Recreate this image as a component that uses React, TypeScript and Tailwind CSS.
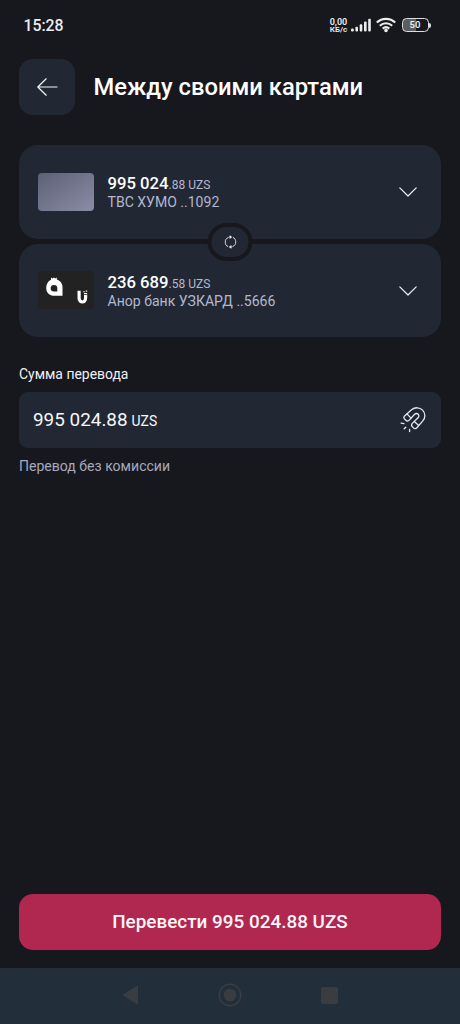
import type { ReactNode } from "react";

function StatusBar() {
  return (
    <div className="flex h-[50px] items-center justify-between pl-[23.5px] pr-[29px] text-[#ededf0]">
      <span className="pt-px text-[15.8px] font-[470] leading-none">15:28</span>
      <div className="flex items-center">
        <div className="mr-px flex w-[18px] flex-col items-center pt-px text-[9px] font-semibold leading-[8px] whitespace-nowrap">
          <span>0,00</span>
          <span className="text-[8px]">КБ/с</span>
        </div>
        <svg className="ml-[2px]" width="21" height="14" viewBox="0 0 21 14" fill="currentColor">
          <rect x="0" y="10.5" width="2.8" height="3" rx="1.2" />
          <rect x="4.4" y="8.7" width="2.6" height="4.8" rx="1" />
          <rect x="8.7" y="6.2" width="2.6" height="7.3" rx="1" />
          <rect x="13" y="3.6" width="2.6" height="9.9" rx="1" />
          <rect x="17.2" y="0.8" width="2.6" height="12.7" rx="1" />
        </svg>
        <svg className="ml-[4px]" width="20" height="16" viewBox="0 0 20 16" fill="none" stroke="currentColor" strokeWidth="2.1">
          <path d="M.8 5.6c5.2-5 13.2-5 18.4 0" />
          <path d="M3.8 8.7c3.6-3.3 8.8-3.3 12.4 0" />
          <path d="M6.7 11.6c2-1.7 4.6-1.7 6.6 0" />
          <circle cx="10" cy="13.4" r="1.8" fill="currentColor" stroke="none" />
        </svg>
        <div className="ml-[6px] flex items-center">
          <div className="flex h-[13.5px] w-[27px] items-center justify-center rounded-[4.5px] border-[1.5px] border-[#dedee2] bg-linear-to-r from-[#5c5d62] from-50% to-transparent to-50% text-[9.5px] font-semibold leading-none">
            50
          </div>
          <div className="ml-[0.5px] h-[5px] w-[2px] rounded-r-sm bg-[#dedee2]" />
        </div>
      </div>
    </div>
  );
}

function AccountCard({ thumb, whole, cents, name }: { thumb: ReactNode; whole: string; cents: string; name: string }) {
  return (
    <div className="flex h-[93.5px] items-center rounded-[19px] bg-[#222833] pl-[18.5px] pr-[24px]">
      {thumb}
      <div className="ml-[14px] flex flex-1 flex-col pt-[3px]">
        <div className="flex h-[18px] items-baseline leading-[18px]">
          <span className="text-[16.7px] font-[485] text-white">{whole}</span>
          <span className="text-[12px] text-[#b3b7d0]">{cents} UZS</span>
        </div>
        <div className="h-[18px] text-[14.05px] leading-[18px] text-[#b3b7d0]">{name}</div>
      </div>
      <svg className="mt-px" width="18" height="10" viewBox="0 0 18 10" fill="none" stroke="#eff0f6" strokeWidth="1.2" strokeLinecap="round" strokeLinejoin="round">
        <path d="M.8.8 9 9 17.2.8" />
      </svg>
    </div>
  );
}

function PlainThumb() {
  return <div className="h-[38px] w-14 rounded-[4px] bg-linear-to-br from-[#5e6076] to-[#8a8da5]" />;
}

function AnorThumb() {
  return (
    <svg className="rounded-[4px] bg-[#222222]" width="56" height="38" viewBox="0 0 56 38">
      <path fill="#fff" fillRule="evenodd" d="M13 6.6 14.6 7.4 15.9 6.6 17.2 7.4 18.8 6.6 18.8 8.6C22.3 9.8 24.5 12.5 24.5 16.2V24.8H16.3C11.6 24.8 8.2 21.4 8.2 16.9C8.2 13 10 10 13 8.7ZM16 13.9A3.3 3.3 0 1 0 16 20.5H19.3V17.2A3.3 3.3 0 0 0 16 13.9Z" />
      <path fill="none" stroke="#fff" strokeWidth="3.2" d="M41.1 19.7V27.3C41.1 32.2 47.6 32.2 47.6 27.3V24" />
      <path fill="none" stroke="#fff" strokeWidth="1.1" d="M45.3 20.8H46.8M47.8 20.1H49.2M46 22.6H49.2" />
    </svg>
  );
}

function SwapButton() {
  return (
    <button className="absolute left-1/2 top-1/2 mt-[0.5px] flex h-[38px] w-[45px] -translate-x-1/2 -translate-y-1/2 items-center justify-center rounded-[19px] border-[4.5px] border-[#17181d] bg-[#222833]">
      <svg width="12" height="14" viewBox="0 0 12 14" fill="none" stroke="#e8e9ef" strokeWidth="1">
        <path d="M4 2.4C-.4 4-.4 10 3.6 11.6M8 11.6C12.4 10 12.4 4 8.4 2.4M6 2H4.5M6 12H7.5" />
        <path fill="#e8e9ef" stroke="none" d="M5.2.3 7.7 2.1 5.2 3.9ZM6.8 10.1 4.3 11.9 6.8 13.7Z" />
      </svg>
    </button>
  );
}

function MagnetIcon() {
  return (
    <svg width="26" height="26" viewBox="0 0 26 26" fill="none" stroke="#e7e8f2" strokeWidth="1.3" strokeLinecap="round" strokeLinejoin="round">
      <path d="M4.6 8.9 11.5 2.8C15 -.1 19.7 .2 22.6 3.1C25.5 6.1 25.6 10.8 22.8 13.9L16.9 20.7C15.9 21.8 14.5 21.9 13.5 20.9L12.3 19.7C11.3 18.7 11.3 17.5 12.3 16.4L18 10.7C19.1 9.6 19.1 8.2 18.2 7.3C17.2 6.3 15.7 6.3 14.6 7.3L9.3 13.1C8.3 14.2 6.9 14.3 5.9 13.3L4.7 12.1C3.7 11.1 3.7 9.9 4.6 8.9Z" />
      <path d="M7 6.9 11 11.1M14.3 14.4 18.7 18.4" />
      <path d="M1.1 16.2 3.9 16.6M4.2 21.8 5.8 20.2M9.6 22.3V24.6" />
    </svg>
  );
}

function NavigationBar() {
  return (
    <div className="flex h-14 items-center justify-between bg-[#232e3b] pb-[2px] pl-[122px] pr-[122.5px] text-[#393c40]">
      <svg width="17" height="20" viewBox="0 0 17 20" fill="currentColor">
        <path d="M.3 10 16 .3V19.7Z" />
      </svg>
      <svg width="24" height="24" viewBox="0 0 24 24" fill="currentColor">
        <circle cx="12" cy="12" r="10.7" fill="none" stroke="currentColor" strokeWidth="1.5" />
        <circle cx="12" cy="12" r="6.3" />
      </svg>
      <div className="size-[17px] rounded-[2px] bg-[#393c40]" />
    </div>
  );
}

export default function App() {
  return (
    <div className="flex h-[1024px] w-[460px] flex-col overflow-hidden bg-[#17181d] font-['Roboto','Noto_Sans',sans-serif]">
      <StatusBar />
      <header className="flex items-center px-[19px] pt-[8.5px]">
        <button className="flex size-14 items-center justify-center rounded-[14px] bg-[#222833]">
          <svg width="21" height="18" viewBox="0 0 21 18" fill="none" stroke="#f4f4f8" strokeWidth="1.2" strokeLinecap="round" strokeLinejoin="round">
            <path d="M20 9H.8M9.2.8.8 9 9.2 17.2" />
          </svg>
        </button>
        <h1 className="ml-[18.5px] whitespace-nowrap text-[23.75px] font-medium leading-7 text-white">Между своими картами</h1>
      </header>
      <main className="flex flex-1 flex-col px-[19px] pb-[18.5px] pt-[30.5px]">
        <section className="relative flex flex-col gap-[5px]">
          <AccountCard thumb={<PlainThumb />} whole="995 024" cents=".88" name="ТВС ХУМО ..1092" />
          <AccountCard thumb={<AnorThumb />} whole="236 689" cents=".58" name="Анор банк УЗКАРД ..5666" />
          <SwapButton />
        </section>
        <label className="mt-[27.5px] text-[13.95px] leading-[18px] text-[#eff0f6]">Сумма перевода</label>
        <div className="mt-[9px] flex h-14 items-center justify-between rounded-[9px] bg-[#222833] pl-[14px] pr-[15px]">
          <div className="flex items-baseline pt-px text-[#f7f7fb]">
            <span className="text-[18.9px]">995 024.88</span>
            <span className="ml-[4px] text-[13.9px]">UZS</span>
          </div>
          <MagnetIcon />
        </div>
        <p className="mt-[9px] text-[14.05px] leading-[18px] text-[#a5a9be]">Перевод без комиссии</p>
        <button className="mt-auto flex h-14 shrink-0 items-center justify-center rounded-[14px] bg-[#b0274f] pt-px text-[18.9px] font-[465] text-[#fcf5f8]">
          Перевести 995 024.88 UZS
        </button>
      </main>
      <NavigationBar />
    </div>
  );
}
